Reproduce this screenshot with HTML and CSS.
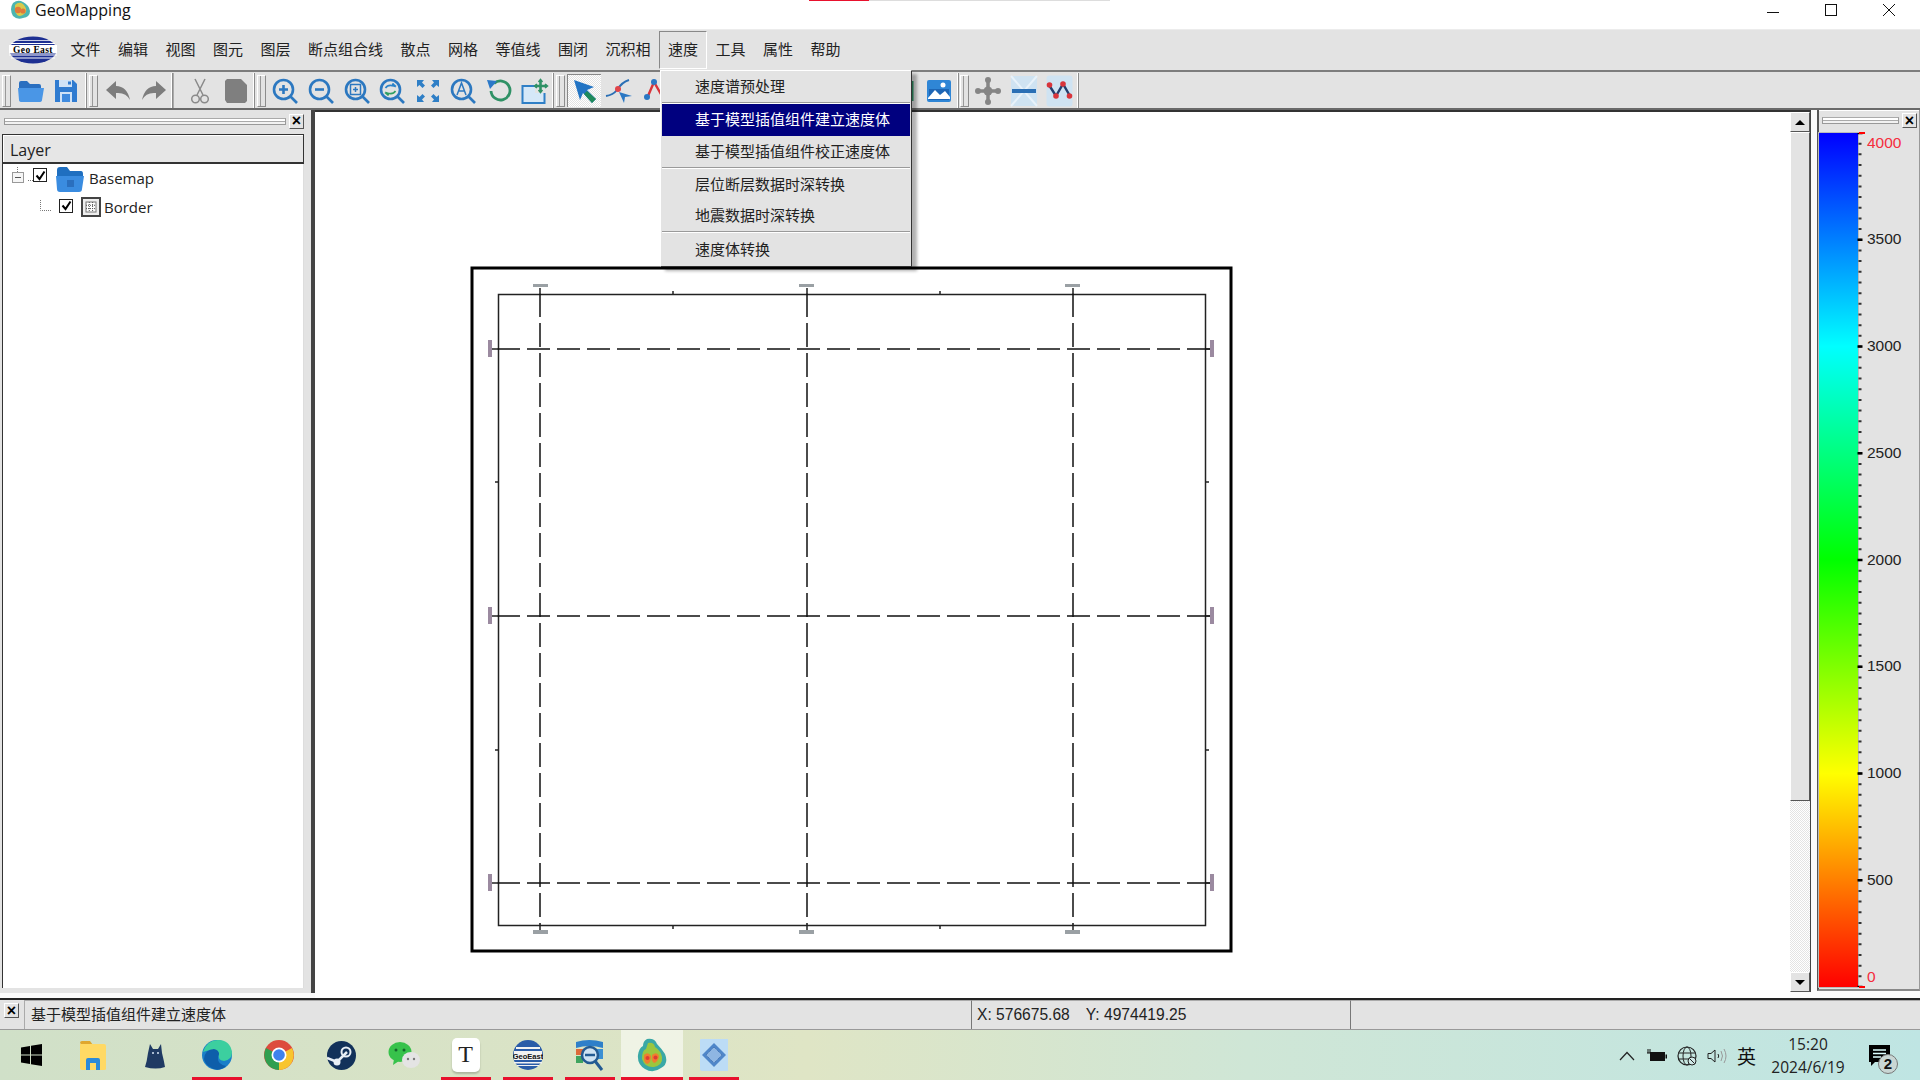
FILE: index.html
```html
<!DOCTYPE html>
<html>
	<head>
		<meta charset="UTF-8">
		<title>GeoMapping</title>
		<link rel="stylesheet" href="styles.css">
	</head>
	<body>
		<div class="loadbar"><span></span></div>
		<div class="titlebar">
			<svg class="appicon" width="22" height="20" viewBox="0 0 22 20">
				<path d="M4 3 Q9 -1 14 2 Q20 5 21 11 Q21 17 14 18 Q8 20 4 16 Q0 9 4 3Z" fill="#4cb5b0"/>
				<path d="M6 5 Q10 1 14 4 Q18 8 17 12 Q14 16 10 16 Q5 14 6 5Z" fill="#d9c94a"/>
				<circle cx="9" cy="10" r="3.2" fill="#e0793a"/>
				<circle cx="14" cy="11" r="2.6" fill="#e0793a"/>
			</svg>
			<span class="apptitle">GeoMapping</span>
			<div class="winbtns">
				<svg width="14" height="14" viewBox="0 0 14 14"><path d="M1 9.500H13" stroke="#111" fill="none"/></svg>
				<svg width="14" height="14" viewBox="0 0 14 14"><rect x="1.500" y="1.500" width="11" height="11" stroke="#111" fill="none"/></svg>
				<svg width="14" height="14" viewBox="0 0 14 14"><path d="M1 1L13 13M13 1L1 13" stroke="#111" fill="none"/></svg>
			</div>
		</div>

		<div class="menubar">
			<div class="logo">
				<svg width="48" height="28" viewBox="0 0 48 28">
					<ellipse cx="24" cy="14" rx="23.500" ry="13.500" fill="#1d2f92"/>
					<path d="M5 4H43V4.800H5ZM2 7H46V8H2ZM0 18.500H48V19.500H0ZM2 21.500H46V22.500H2Z" fill="#fff"/>
					<rect x="0" y="9" width="48" height="8.500" fill="#fff"/>
					<text x="24" y="16.500" text-anchor="middle" class="logotext">Geo East</text>
				</svg>
			</div>
			<span class="menu">文件</span>
			<span class="menu">编辑</span>
			<span class="menu">视图</span>
			<span class="menu">图元</span>
			<span class="menu">图层</span>
			<span class="menu">断点组合线</span>
			<span class="menu">散点</span>
			<span class="menu">网格</span>
			<span class="menu">等值线</span>
			<span class="menu">围闭</span>
			<span class="menu">沉积相</span>
			<span class="menu menu-open">速度</span>
			<span class="menu">工具</span>
			<span class="menu">属性</span>
			<span class="menu">帮助</span>
		</div>

		<div class="toolbar">
			<div class="toolgroup toolgroup-first">
				<span class="grip"></span>
				<span class="tool"><svg width="28" height="24" viewBox="0 0 28 24"><path d="M2 4Q2 2 4 2H10L13 5H22Q24 5 24 7V9H2Z" fill="#2a6fc0"/><path d="M1 9H27L25 21Q25 23 22 23H5Q2 23 2 21Z" fill="#4a96e6"/></svg></span>
				<span class="tool"><svg width="24" height="24" viewBox="0 0 24 24"><path d="M1 1H19L23 5V23H1Z" fill="#2f7bd0"/><rect x="5" y="1" width="13" height="7" fill="#cfe2f6"/><rect x="14" y="2.500" width="3" height="3" fill="#2f7bd0"/><rect x="6" y="13" width="12" height="10" fill="#cfe2f6"/><rect x="8" y="15" width="8" height="8" fill="#3f8ade"/></svg></span>
			</div>
			<div class="toolgroup">
				<span class="grip"></span>
				<span class="tool"><svg width="26" height="22" viewBox="0 0 26 22"><path d="M11 1V6Q22 6 25 20Q21 12 11 13V19L1 10Z" fill="#7d7d7d"/></svg></span>
				<span class="tool"><svg width="26" height="22" viewBox="0 0 26 22"><path d="M15 1V6Q4 6 1 20Q5 12 15 13V19L25 10Z" fill="#7d7d7d"/></svg></span>
			</div>
			<div class="toolgroup toolgroup-plain">
				<span class="tool"><svg width="20" height="26" viewBox="0 0 20 26"><path d="M5 1L13 17M15 1L7 17" stroke="#8a8a8a" stroke-width="1.500" fill="none"/><circle cx="5.500" cy="21" r="3.800" stroke="#8a8a8a" stroke-width="1.500" fill="none"/><circle cx="14.500" cy="21" r="3.800" stroke="#8a8a8a" stroke-width="1.500" fill="none"/></svg></span>
				<span class="tool"><svg width="24" height="26" viewBox="0 0 24 26"><path d="M3 1H17L23 7V23L21 25H3L1 22V3Z" fill="#7f7f7f"/></svg></span>
			</div>
			<div class="toolgroup">
				<span class="grip"></span>
				<span class="tool"><svg width="26" height="26" viewBox="0 0 26 26"><circle cx="11.500" cy="11.500" r="9.500" class="lens"/><path d="M18.500 18.500L25 25" class="lens"/><path d="M7 11.500H16M11.500 7V16" class="lens"/></svg></span>
				<span class="tool"><svg width="26" height="26" viewBox="0 0 26 26"><circle cx="11.500" cy="11.500" r="9.500" class="lens"/><path d="M18.500 18.500L25 25" class="lens"/><path d="M7 11.500H16" class="lens"/></svg></span>
				<span class="tool"><svg width="26" height="26" viewBox="0 0 26 26"><circle cx="11.500" cy="11.500" r="9.500" class="lens"/><path d="M18.500 18.500L25 25" class="lens"/><rect x="6.500" y="6.500" width="10" height="10" class="lens-thin"/><path d="M9 11.500H14M11.500 9V14" class="lens-thin"/></svg></span>
				<span class="tool"><svg width="26" height="26" viewBox="0 0 26 26"><circle cx="11.500" cy="11.500" r="9.500" class="lens"/><path d="M18.500 18.500L25 25" class="lens"/><path d="M6.500 10Q9 6 15 8L13.500 5.500L17 8.500" stroke="#2a82c9" stroke-width="1.600" fill="none"/><path d="M16.500 13Q14 17 8 15L9.500 17.500L6 14.500" stroke="#2f9e63" stroke-width="1.600" fill="none"/></svg></span>
				<span class="tool"><svg width="24" height="24" viewBox="0 0 24 24"><path d="M1 1H8L6 3.500L9 6.500L6.500 9L3.500 6L1 8ZM23 1V8L20.500 6L17.500 9L15 6.500L18 3.500L16 1ZM1 23V16L3.500 18L6.500 15L9 17.500L6 20.500L8 23ZM23 23H16L18 20.500L15 17.500L17.500 15L20.500 18L23 16Z" fill="#2f7fc6"/></svg></span>
				<span class="tool"><svg width="26" height="26" viewBox="0 0 26 26"><circle cx="11.500" cy="11.500" r="9.500" class="lens"/><path d="M18.500 18.500L25 25" class="lens"/><path d="M7 17L11.500 5L16 17M8.500 13H14.500" class="lens-thin"/></svg></span>
				<span class="tool"><svg width="26" height="26" viewBox="0 0 26 26"><path d="M5 13A9.500 9.500 0 1 0 8 5.500" stroke="#2f9165" stroke-width="2.800" fill="none"/><path d="M1 2L11 3L4 11Z" fill="#2b78c8"/></svg></span>
				<span class="tool"><svg width="28" height="26" viewBox="0 0 28 26"><rect x="1.500" y="8" width="22" height="17" fill="#d5e8f8" stroke="#2f7fc6" stroke-width="2"/><rect x="14" y="1" width="12" height="14" fill="#e3e3e3"/><path d="M19.500 2V14M14 8H26" stroke="#2f9165" stroke-width="2.600"/><path d="M17.500 4L19.500 1.500L21.500 4M17.500 12L19.500 14.500L21.500 12M16 6L13.500 8L16 10M24 6L26.500 8L24 10" stroke="#2f9165" stroke-width="1.500" fill="none"/></svg></span>
			</div>
			<div class="toolgroup">
				<span class="grip"></span>
				<span class="tool tool-on"><svg width="26" height="26" viewBox="0 0 26 26"><path d="M2 2L22 9L15 12L24 21L20 25L11 15L8 22Z" fill="#2274c4"/><path d="M15 13L24 21L20 25L12 16Z" fill="#1f8a5a"/></svg></span>
				<span class="tool"><svg width="28" height="24" viewBox="0 0 28 24"><path d="M1 17Q8 16 12 11Q17 3 24 1" stroke="#2a6fb5" stroke-width="2" fill="none"/><circle cx="13" cy="10" r="3" fill="#e0454a"/><path d="M14 13L27 17L20 18L19 24Z" fill="#2a78c4"/></svg></span>
				<span class="tool"><svg width="26" height="26" viewBox="0 0 26 26"><path d="M6 18L12 4L20 18" stroke="#d8343a" stroke-width="2.400" fill="none"/><circle cx="12" cy="4" r="3" fill="#2a78c4"/><circle cx="5" cy="19" r="3" fill="#2a78c4"/></svg></span>
				<span class="tool-gap"></span>
				<span class="tool"><svg width="24" height="26" viewBox="0 0 24 26"><path d="M21 3V23" stroke="#2f9165" stroke-width="3"/></svg></span>
				<span class="tool"><svg width="26" height="24" viewBox="0 0 26 24"><rect x="1" y="1" width="24" height="22" rx="2" fill="#2f86d6"/><path d="M3 10H23V21H3Z" fill="#1e66b5"/><path d="M2 19L9 11L14 16L19 12L24 18V20H2Z" fill="#fff"/><circle cx="17" cy="6" r="2.500" fill="#fff"/></svg></span>
			</div>
			<div class="toolgroup toolgroup-last">
				<span class="grip"></span>
				<span class="tool"><svg width="26" height="30" viewBox="0 0 26 30"><path d="M13 4V26M3 15H23" stroke="#858585" stroke-width="3.500"/><circle cx="13" cy="15" r="4.500" fill="#858585"/><circle cx="13" cy="4" r="3" fill="#858585"/><circle cx="13" cy="26" r="3" fill="#858585"/><circle cx="3" cy="15" r="3" fill="#858585"/><circle cx="23" cy="15" r="3" fill="#858585"/></svg></span>
				<span class="tool"><svg width="28" height="32" viewBox="0 0 28 32"><rect x="1" y="1" width="26" height="30" rx="3" fill="#cfe3f2"/><path d="M1 1L27 31M27 1L1 31" stroke="#e8f2fa" stroke-width="2"/><rect x="2" y="14" width="24" height="4" fill="#2a6fb5"/></svg></span>
				<span class="tool"><svg width="27" height="32" viewBox="0 0 27 32"><rect x="0.500" y="0.500" width="26" height="31" rx="3" fill="#cfe3f2"/><path d="M3 10L10 21L17 9L24 21" stroke="#233f6e" stroke-width="2.400" fill="none"/><circle cx="3.500" cy="10" r="2.800" fill="#d9343a"/><circle cx="10" cy="21" r="2.800" fill="#d9343a"/><circle cx="17" cy="9" r="2.800" fill="#d9343a"/><circle cx="23.500" cy="21" r="2.800" fill="#d9343a"/></svg></span>
			</div>
		</div>

		<div class="work">
			<div class="sidepanel">
				<div class="panelhead">
					<span class="hgrip"></span>
					<span class="closebtn">×</span>
				</div>
				<div class="layerhead">Layer</div>
				<div class="tree">
					<div class="treerow treerow-root">
						<svg class="treelink" width="24" height="24" viewBox="0 0 24 24">
							<path d="M5.500 1V6M16 14.500H22" stroke="#777" stroke-dasharray="1 1" fill="none"/>
							<rect x="0.500" y="6.500" width="11" height="10" fill="#f6f6f6" stroke="#999"/>
							<path d="M3 11.500H9" stroke="#555"/>
						</svg>
						<span class="check"><svg width="11" height="11" viewBox="0 0 11 11"><path d="M1.500 5.500L4.500 9L9.500 1.500" stroke="#000" stroke-width="2" fill="none"/></svg></span>
						<svg class="treeicon-folder" width="28" height="26" viewBox="0 0 28 26"><path d="M1 4Q1 1 4 1H11L14 5H25Q27 5 27 8V10H1Z" fill="#1f6fc0"/><path d="M0 10H28L26 23Q26 26 23 26H4Q1 26 1 23Z" fill="#3a8ce0"/><rect x="11" y="14" width="7" height="7" fill="#2a6fbe"/></svg>
						<span class="treelabel">Basemap</span>
					</div>
					<div class="treerow treerow-child">
						<svg class="treelink" width="14" height="14" viewBox="0 0 14 14"><path d="M1.500 0V10.500H13" stroke="#777" stroke-dasharray="1 1" fill="none"/></svg>
						<span class="check"><svg width="11" height="11" viewBox="0 0 11 11"><path d="M1.500 5.500L4.500 9L9.500 1.500" stroke="#000" stroke-width="2" fill="none"/></svg></span>
						<svg class="treeicon-grid" width="20" height="20" viewBox="0 0 20 20"><rect x="1" y="1" width="18" height="18" fill="#eee" stroke="#444" stroke-width="2"/><rect x="5" y="5" width="10" height="10" fill="#fff" stroke="#777"/><path d="M5 8.300H15M5 11.600H15M8.300 5V15M11.600 5V15" stroke="#555" stroke-dasharray="1 1"/></svg>
						<span class="treelabel">Border</span>
					</div>
				</div>
			</div>

			<div class="canvas">
				<svg class="mapsheet" width="1475" height="886" viewBox="315 112 1475 886">
					<rect x="472" y="268" width="759" height="683" class="frame-outer"/>
					<rect x="498.500" y="294.500" width="707" height="631" class="frame-inner"/>
					<path d="M540 293V925M807 293V925M1073 293V925" class="dash-v"/>
					<path d="M497 349H1212M497 616H1212M497 883H1212" class="dash-h"/>
					<path d="M492 349H497M492 616H497M492 883H497M1206 349H1213M1206 616H1213M1206 883H1213M540 288V293M807 288V293M1073 288V293M540 926V931M807 926V931M1073 926V931" class="frame-inner"/>
					<path d="M673 291V294M940 291V294M673 926V929M940 926V929M495 482H498M495 750H498M1206 482H1209M1206 750H1209" class="frame-inner"/>
					<g class="axis-x">
						<rect x="533" y="284" width="15" height="3"/><rect x="799" y="284" width="15" height="3"/><rect x="1065" y="284" width="15" height="3"/>
						<rect x="533" y="930" width="15" height="4"/><rect x="799" y="930" width="15" height="4"/><rect x="1065" y="930" width="15" height="4"/>
					</g>
					<g class="axis-y">
						<rect x="488" y="340" width="4" height="17"/><rect x="488" y="607" width="4" height="17"/><rect x="488" y="874" width="4" height="17"/>
						<rect x="1210" y="340" width="4" height="17"/><rect x="1210" y="607" width="4" height="17"/><rect x="1210" y="874" width="4" height="17"/>
					</g>
				</svg>
			</div>

			<div class="vscroll">
				<span class="sbtn"><span class="arrow-up"></span></span>
				<span class="thumb"></span>
				<span class="track"></span>
				<span class="sbtn"><span class="arrow-down"></span></span>
			</div>

			<div class="colorpanel">
				<div class="panelhead panelhead-color">
					<span class="hgrip"></span>
					<span class="closebtn">×</span>
				</div>
				<div class="legend">
					<div class="ramp"></div>
					<svg class="scale" width="61" height="856" viewBox="0 0 61 856">
						<path d="M2 0V854" class="tick-minor"/>
						<path d="M2 0V854" class="tick-major"/>
						<path d="M1 0H7M1 854H7" class="tick-end"/>
						<text x="9" y="15" class="val val-end">4000</text>
						<text x="9" y="111" class="val">3500</text>
						<text x="9" y="218" class="val">3000</text>
						<text x="9" y="325" class="val">2500</text>
						<text x="9" y="432" class="val">2000</text>
						<text x="9" y="538" class="val">1500</text>
						<text x="9" y="645" class="val">1000</text>
						<text x="9" y="752" class="val">500</text>
						<text x="9" y="849" class="val val-end">0</text>
					</svg>
				</div>
			</div>
		</div>

		<div class="statusbar">
			<span class="statusclose"><span class="closebtn">×</span></span>
			<span class="pane pane-msg">基于模型插值组件建立速度体</span>
			<span class="pane pane-xy"><span class="coord-x">X: 576675.68</span><span>Y: 4974419.25</span></span>
			<span class="pane pane-rest"></span>
		</div>

		<div class="taskbar">
			<div class="taskitems">
				<span class="task"><svg width="21" height="22" viewBox="0 0 21 22"><path d="M0 3.500L9 2V10.500H0ZM10 1.800L21 0V10.500H10ZM0 11.500H9V20L0 18.500ZM10 11.500H21V22L10 20.200Z" fill="#000"/></svg></span>
				<span class="task"><svg width="28" height="31" viewBox="0 0 28 31"><path d="M1 3Q1 1 3 1H11L14 5H3Z" fill="#e0a72e"/><path d="M1 4H25Q27 4 27 6V29Q27 30 25 30H3Q1 30 1 28Z" fill="#ffd964"/><path d="M7 30V20Q7 18 9 18H19Q21 18 21 20V30H17V23H11V30Z" fill="#2c8ad8"/></svg></span>
				<span class="task"><svg width="22" height="28" viewBox="0 0 22 28"><path d="M6 3L9 8H14L17 3L18 12Q20 20 21 26Q12 29 1 26Q3 20 4 12Z" fill="#1f3a63"/><circle cx="9" cy="12" r="1" fill="#d9e6f5"/><circle cx="14" cy="12" r="1" fill="#d9e6f5"/></svg></span>
				<span class="task task-on"><svg width="30" height="30" viewBox="0 0 30 30"><circle cx="15" cy="15" r="15" fill="#1a7fc9"/><path d="M1 12Q5 0 16 0Q28 0 30 12Q30 20 22 21Q15 20 17 13Q10 8 1 12Z" fill="#3ccf9f"/><path d="M2 19Q3 9 12 9Q17 10 17 14Q13 24 24 26Q16 33 8 27Q3 24 2 19Z" fill="#0e5eaa"/></svg></span>
				<span class="task"><svg width="30" height="30" viewBox="0 0 30 30"><circle cx="15" cy="15" r="15" fill="#dd4b3e"/><path d="M15 15L28 8A15 15 0 0 1 15 30Z" fill="#f8c52e"/><path d="M15 15L15 30A15 15 0 0 1 2 8Z" fill="#2f9f4f"/><circle cx="15" cy="15" r="7.500" fill="#fff"/><circle cx="15" cy="15" r="5.800" fill="#3f82ec"/></svg></span>
				<span class="task"><svg width="29" height="29" viewBox="0 0 29 29"><circle cx="14.500" cy="14.500" r="14.500" fill="#12315a"/><path d="M0 17L10 21L20 11" stroke="#e8eef5" stroke-width="2.500" fill="none"/><circle cx="19" cy="11" r="4.500" fill="none" stroke="#e8eef5" stroke-width="2"/><circle cx="10" cy="21" r="3.500" fill="#e8eef5"/></svg></span>
				<span class="task"><svg width="32" height="28" viewBox="0 0 32 28"><ellipse cx="12" cy="11" rx="11.500" ry="10" fill="#37c24b"/><path d="M6 18L5 24L11 20Z" fill="#37c24b"/><ellipse cx="23" cy="19" rx="9" ry="8" fill="#e4e4e4"/><circle cx="8" cy="9" r="1.500" fill="#14682c"/><circle cx="16" cy="9" r="1.500" fill="#14682c"/><circle cx="20" cy="18" r="1.200" fill="#777"/><circle cx="26" cy="18" r="1.200" fill="#777"/></svg></span>
				<span class="task task-on"><span class="typora">T</span></span>
				<span class="task task-on"><svg width="30" height="30" viewBox="0 0 30 30"><circle cx="15" cy="15" r="15" fill="#2a5ca8"/><path d="M3 7H27V9H3ZM1 11H29V20H1ZM1 22H29V23.500H1ZM4 25H26V26H4Z" fill="#f2f2f2"/><text x="15" y="18.500" text-anchor="middle" class="geotext">GeoEast</text></svg></span>
				<span class="task task-on"><svg width="30" height="32" viewBox="0 0 30 32"><path d="M1 3Q14 -1 28 3V9Q14 5 1 9Z" fill="#2e7fc9"/><path d="M1 10H8V16H1Z" fill="#dd6a3a"/><path d="M1 17H8V24H1Z" fill="#3fa45f"/><path d="M22 10H28V20H22Z" fill="#3b8fd3"/><circle cx="15" cy="16" r="8" fill="#cfe2f2" stroke="#235a92" stroke-width="2.500"/><path d="M10 16H20" stroke="#235a92" stroke-width="2.500"/><path d="M20 22L27 31" stroke="#235a92" stroke-width="3"/></svg></span>
				<span class="task task-active"><svg width="30" height="34" viewBox="0 0 30 34"><path d="M10 1Q18 0 20 6Q24 10 28 16Q32 26 24 30Q16 36 8 31Q0 26 1 17Q2 10 6 8Q6 3 10 1Z" fill="#3aa8a6"/><path d="M11 5Q17 4 18 9Q24 13 25 19Q26 27 17 29Q8 30 5 21Q5 12 9 11Z" fill="#9bc63f"/><path d="M7 17Q11 13 14 18Q14 25 10 26Q6 24 7 17Z" fill="#ef7d2f"/><path d="M15 17Q20 13 22 18Q21 24 17 25Q14 23 15 17Z" fill="#ef7d2f"/><circle cx="10.500" cy="20" r="2" fill="#e03c32"/><circle cx="18.500" cy="19.500" r="2" fill="#e03c32"/></svg></span>
				<span class="task task-on"><svg width="30" height="34" viewBox="0 0 30 34"><path d="M1 2Q1 1 2 1H29V33H3Q1 33 1 31Z" fill="#bcdcf6"/><path d="M15 5L27 17L15 29L3 17Z" fill="#4f86c9"/><path d="M15 9L23 17L15 25L7 17Z" fill="#8fb6e2" stroke="#3c6cae" stroke-dasharray="1 1"/></svg></span>
			</div>
			<div class="tray">
				<svg width="16" height="10" viewBox="0 0 16 10"><path d="M1 9L8 1.500L15 9" stroke="#222" stroke-width="1.200" fill="none"/></svg>
				<svg class="tray-batt" width="20" height="14" viewBox="0 0 20 14"><rect x="3.500" y="3.500" width="14" height="8" fill="#111" stroke="#111"/><rect x="18.500" y="5.500" width="1.500" height="4" fill="#111"/><path d="M0 4H4M1 0V4M3 0V4" stroke="#111"/></svg>
				<svg class="tray-globe" width="20" height="20" viewBox="0 0 20 20"><circle cx="10" cy="10" r="9" stroke="#222" stroke-width="1.200" fill="none"/><ellipse cx="10" cy="10" rx="4" ry="9" stroke="#222" fill="none"/><path d="M1.500 7H18.500M1.500 13H18.500" stroke="#222"/><circle cx="15" cy="15" r="4" fill="#cfe8e6" stroke="#222"/><path d="M12.500 12.500L17.500 17.500" stroke="#222"/></svg>
				<svg class="tray-vol" width="20" height="16" viewBox="0 0 20 16"><path d="M1 5.500H4L8 2V14L4 10.500H1Z" fill="none" stroke="#222"/><path d="M11 6Q12.500 8 11 10" stroke="#222" fill="none"/><path d="M14 3Q17 8 14 13M17 1Q21 8 17 15" stroke="#999" fill="none"/></svg>
				<span class="ime">英</span>
				<div class="clock"><span>15:20</span><span>2024/6/19</span></div>
				<span class="notify">
					<svg width="21" height="22" viewBox="0 0 21 22"><path d="M0 0H21V17H6L2 21V17H0Z" fill="#000"/><path d="M4 5H17M4 8.500H17M4 12H12" stroke="#dff" stroke-width="1.300"/></svg>
					<span class="badge">2</span>
				</span>
			</div>
		</div>

		<div class="dropmenu">
			<div class="dropitem">速度谱预处理</div>
			<div class="dropsep"></div>
			<div class="dropitem dropitem-on">基于模型插值组件建立速度体</div>
			<div class="dropitem">基于模型插值组件校正速度体</div>
			<div class="dropsep"></div>
			<div class="dropitem">层位断层数据时深转换</div>
			<div class="dropitem">地震数据时深转换</div>
			<div class="dropsep"></div>
			<div class="dropitem dropitem-last">速度体转换</div>
		</div>
	</body>
</html>
```

FILE: styles.css
```css
*{
	margin:0;
	padding:0;
	box-sizing:border-box;
}
body{
	position:relative;
	width:1920px;
	height:1080px;
	overflow:hidden;
	display:flex;
	flex-direction:column;
	background:#fff;
	font-family:"Liberation Sans","Noto Sans CJK SC",sans-serif;
	color:#222;
}
svg{
	display:block;
	flex:none;
}
.loadbar{
	position:absolute;
	left:809px;
	top:0;
	width:301px;
	height:1px;
	background:#ddd;
}
.loadbar span{
	display:block;
	width:60px;
	height:1px;
	background:#e8112d;
}
.titlebar{
	height:29px;
	display:flex;
	align-items:center;
	padding-left:9px;
	background:#fff;
}
.apptitle{
	margin-left:4px;
	margin-top:-10px;
	font-family:"Open Sans",sans-serif;
	font-size:16px;
	color:#111;
}
.appicon{
	margin-top:-10px;
}
.winbtns{
	margin-left:auto;
	display:flex;
	gap:44px;
	padding-right:24px;
	margin-top:-10px;
}
.menubar{
	height:43px;
	display:flex;
	align-items:center;
	background:#e3e3e3;
	border-top:1px solid #ececec;
	border-bottom:2px solid #7d7d7d;
	padding-bottom:1px;
}
.logo{
	width:61px;
	padding-left:9px;
}
.logotext{
	font-family:"Liberation Serif",serif;
	font-size:9.500px;
	font-weight:bold;
	letter-spacing:0.4px;
	fill:#000;
}
.menu{
	padding:0 8.400px;
	font-size:15px;
	line-height:36px;
	border:1px solid transparent;
	margin-right:-1.300px;
}
.menu-open{
	border-color:#888 #fff #fff #888;
}
.toolbar{
	height:38px;
	display:flex;
	background:#e3e3e3;
	border-bottom:2px solid #6a6a6a;
	padding-top:1px;
}
.toolgroup{
	display:flex;
	align-items:center;
	height:35px;
	border-right:1px solid #8c8c8c;
	box-shadow:inset -1px 0 0 #fff;
	padding-right:1px;
}
.toolgroup-first{
	padding-right:2px;
}
.toolgroup-plain{
	padding:0 0 0 8px;
	border-left:1px solid #aaa;
}
.toolgroup-last{
	margin-left:-1px;
}
.grip{
	width:9px;
	height:32px;
	margin:0 2px 0 2px;
	border:solid #8c8c8c;
	border-width:1px;
	border-top-color:#fff;
	border-left-color:#fff;
	box-shadow:inset 2px 0 0 #e3e3e3,inset 3px 0 0 #999;
}
.tool{
	width:35.600px;
	height:33px;
	display:flex;
	align-items:center;
	justify-content:center;
}
.tool-on{
	width:34px;
	background:repeating-conic-gradient(#e3e3e3 0 25%,#fff 0 50%) 0 0/2px 2px;
	border-top:1px solid #888;
	border-left:1px solid #888;
}
.tool-gap{
	width:213px;
}
.lens{
	fill:none;
	stroke:#2c78c0;
	stroke-width:2.600;
}
.lens-thin{
	fill:none;
	stroke:#2c78c0;
	stroke-width:1.500;
}
.work{
	flex:1;
	display:flex;
	min-height:0;
	background:#fafafa;
}
.sidepanel{
	width:315px;
	background:#e3e3e3;
	border-right:4px solid #444;
	padding:0 7px 5px 2px;
	margin-bottom:5px;
	display:flex;
	flex-direction:column;
}
.panelhead{
	height:24px;
	padding-bottom:2px;
	display:flex;
	align-items:center;
	gap:3px;
	padding-left:2px;
}
.hgrip{
	flex:1;
	height:7px;
	border:1px solid #999;
	border-top-color:#aaa;
	background:linear-gradient(#fff 0 2px,#aaa 2px 3px,#f2f2f2 3px);
}
.closebtn{
	width:15px;
	height:15px;
	display:flex;
	align-items:center;
	justify-content:center;
	font-size:16px;
	font-weight:bold;
	line-height:1;
	color:#000;
	background:#e3e3e3;
	border:1px solid;
	border-color:#fff #555 #555 #fff;
}
.layerhead{
	height:30px;
	line-height:30px;
	padding-left:7px;
	font-family:"Open Sans",sans-serif;
	font-size:16px;
	background:#e6e6e6;
	border:1px solid #333;
	border-bottom-width:2px;
	box-shadow:inset 1px 1px 0 #fff;
}
.tree{
	flex:1;
	background:#fff;
	border-left:1px solid #333;
	border-right:1px solid #ddd;
	padding-top:1px;
}
.treerow{
	display:flex;
	align-items:center;
}
.treerow-root{
	height:26px;
	padding-left:9px;
}
.treerow-child{
	height:31px;
	padding-left:36px;
}
.treelabel{
	font-family:"Open Sans",sans-serif;
	font-size:15px;
	color:#222;
}
.check{
	width:14px;
	height:14px;
	background:#fff;
	border:1px solid #222;
	display:flex;
	align-items:center;
	justify-content:center;
}
.treerow-root .check{
	margin:-6px 9px 0 -3px;
}
.treerow-root .treelabel{
	margin-left:5px;
}
.treerow-child .check{
	margin:-2px 8px 0 6px;
}
.treerow-child .treelabel{
	margin-left:3px;
}
.treeicon-folder{
	margin-top:2px;
}
.canvas{
	flex:1;
	min-width:0;
	background:#fff;
	border-top:2px solid #333;
}
.frame-outer{
	fill:none;
	stroke:#000;
	stroke-width:3;
}
.frame-inner{
	fill:none;
	stroke:#222;
	stroke-width:1.500;
}
.dash-v{
	fill:none;
	stroke:#111;
	stroke-width:1.500;
	stroke-dasharray:24 6;
}
.dash-h{
	fill:none;
	stroke:#111;
	stroke-width:1.500;
	stroke-dasharray:23 7;
}
.axis-x rect{
	fill:#9aa0a4;
}
.axis-y rect{
	fill:#9b8aa0;
}
.vscroll{
	width:21px;
	display:flex;
	flex-direction:column;
	align-items:stretch;
	border-top:2px solid #333;
	border-right:1px solid #444;
	margin-bottom:6px;
	background:#fff;
}
.sbtn{
	height:20px;
	flex:none;
	display:flex;
	align-items:center;
	justify-content:center;
	background:#e3e3e3;
	border:1px solid;
	border-color:#fff #555 #555 #fff;
}
.arrow-up{
	border-left:5px solid transparent;
	border-right:5px solid transparent;
	border-bottom:5px solid #000;
}
.arrow-down{
	border-left:5px solid transparent;
	border-right:5px solid transparent;
	border-top:5px solid #000;
}
.thumb{
	height:669px;
	flex:none;
	background:#e3e3e3;
	border:1px solid;
	border-color:#fff #555 #555 #fff;
}
.track{
	flex:1;
	background:repeating-conic-gradient(#e3e3e3 0 25%,#fff 0 50%) 0 0/2px 2px;
}
.colorpanel{
	width:103px;
	margin-left:6px;
	margin-bottom:7px;
	background:#e3e3e3;
	border-left:2px solid #555;
	border-right:1px solid #999;
	border-bottom:2px solid #888;
	display:flex;
	flex-direction:column;
}
.panelhead-color{
	height:23px;
	padding:0 2px 3px 3px;
	border-top:1px solid #fff;
}
.legend{
	display:flex;
}
.ramp{
	width:40px;
	height:854px;
	background:linear-gradient(#00f 0%,#0ff 25%,#0f0 50%,#ff0 75%,#f00 100%);
	outline:1px solid #bbb;
}
.scale{
	overflow:visible;
}
.tick-minor{
	fill:none;
	stroke:#333;
	stroke-width:3;
	stroke-dasharray:2 8.675;
	stroke-dashoffset:1;
}
.tick-major{
	fill:none;
	stroke:#000;
	stroke-width:5;
	stroke-dasharray:2.500 104.250;
	stroke-dashoffset:1.250;
}
.tick-end{
	fill:none;
	stroke:#f00;
	stroke-width:2;
}
.val{
	font-family:"Liberation Sans",sans-serif;
	font-size:15.500px;
	fill:#222;
}
.val-end{
	fill:#f52d3d;
}
.statusbar{
	height:32px;
	flex:none;
	display:flex;
	background:#e3e3e3;
	border-top:2px solid #222;
	border-bottom:1px solid #999;
	font-size:15px;
}
.statusclose{
	width:24px;
	padding:3px 0 0 4px;
}
.pane{
	height:29px;
	line-height:28px;
	border-left:1px solid #aaa;
	border-top:1px solid #aaa;
}
.pane-msg{
	width:947px;
	padding-left:6px;
}
.pane-xy{
	width:379px;
	padding-left:5px;
	border-left-color:#777;
	font-size:15.600px;
}
.coord-x{
	margin-right:16px;
}
.pane-rest{
	flex:1;
	border-left-color:#777;
}
.taskbar{
	height:50px;
	flex:none;
	display:flex;
	align-items:stretch;
	background:linear-gradient(90deg,#d0e0c8 0%,#dfe5c5 42%,#cfe6d6 65%,#bfe5e3 100%);
}
.taskitems{
	display:flex;
}
.task{
	width:62.100px;
	display:flex;
	align-items:center;
	justify-content:center;
	position:relative;
}
.task-on::after,.task-active::after{
	content:"";
	position:absolute;
	left:6px;
	right:6px;
	bottom:0;
	height:3px;
	background:#e8112d;
}
.task-active{
	background:rgba(255,255,255,0.55);
}
.task-active::after{
	left:0;
	right:0;
}
.typora{
	width:28px;
	height:34px;
	background:#fff;
	border-radius:5px;
	box-shadow:0 2px 2px rgba(0,0,0,0.2);
	font-family:"Liberation Serif",serif;
	font-size:24px;
	line-height:32px;
	text-align:center;
	color:#222;
}
.geotext{
	font-family:"Liberation Sans",sans-serif;
	font-size:7.500px;
	font-weight:bold;
	fill:#111;
}
.tray{
	margin-left:auto;
	display:flex;
	align-items:center;
	padding-right:30px;
}
.tray svg{
	margin-top:1px;
}
.tray-batt{
	margin-left:12px;
}
.tray-globe{
	margin-left:10px;
}
.tray-vol{
	margin-left:10px;
}
.ime{
	margin-left:10px;
	font-size:19px;
	color:#111;
	font-family:"Noto Sans CJK SC",sans-serif;
}
.clock{
	width:84px;
	margin-left:10px;
	display:flex;
	flex-direction:column;
	align-items:center;
	gap:3px;
	font-family:"Open Sans",sans-serif;
	font-size:15.500px;
	line-height:20px;
	color:#222;
}
.notify{
	position:relative;
	margin-left:19px;
	width:21px;
}
.badge{
	position:absolute;
	left:9px;
	top:10px;
	width:20px;
	height:20px;
	border-radius:50%;
	background:#c9d6d4;
	border:1px solid #777;
	text-align:center;
	font-size:15px;
	font-weight:bold;
	line-height:18px;
	color:#111;
}
.dropmenu{
	position:absolute;
	left:660px;
	top:70px;
	width:252px;
	height:197px;
	padding:0 1px;
	background:#e3e3e3;
	border:1px solid;
	border-color:#fff #333 #333 #fff;
	box-shadow:5px 4px 3px rgba(0,0,0,0.3);
	font-size:15px;
}
.dropitem{
	height:31px;
	line-height:31px;
	padding-left:33px;
	color:#222;
}
.dropitem-on{
	height:32px;
	line-height:32px;
	background:#00007f;
	color:#fff;
}
.dropitem-last{
	line-height:33px;
}
.dropsep{
	height:2px;
	background:#9a9a9a;
	border-bottom:1px solid #fff;
}
```
